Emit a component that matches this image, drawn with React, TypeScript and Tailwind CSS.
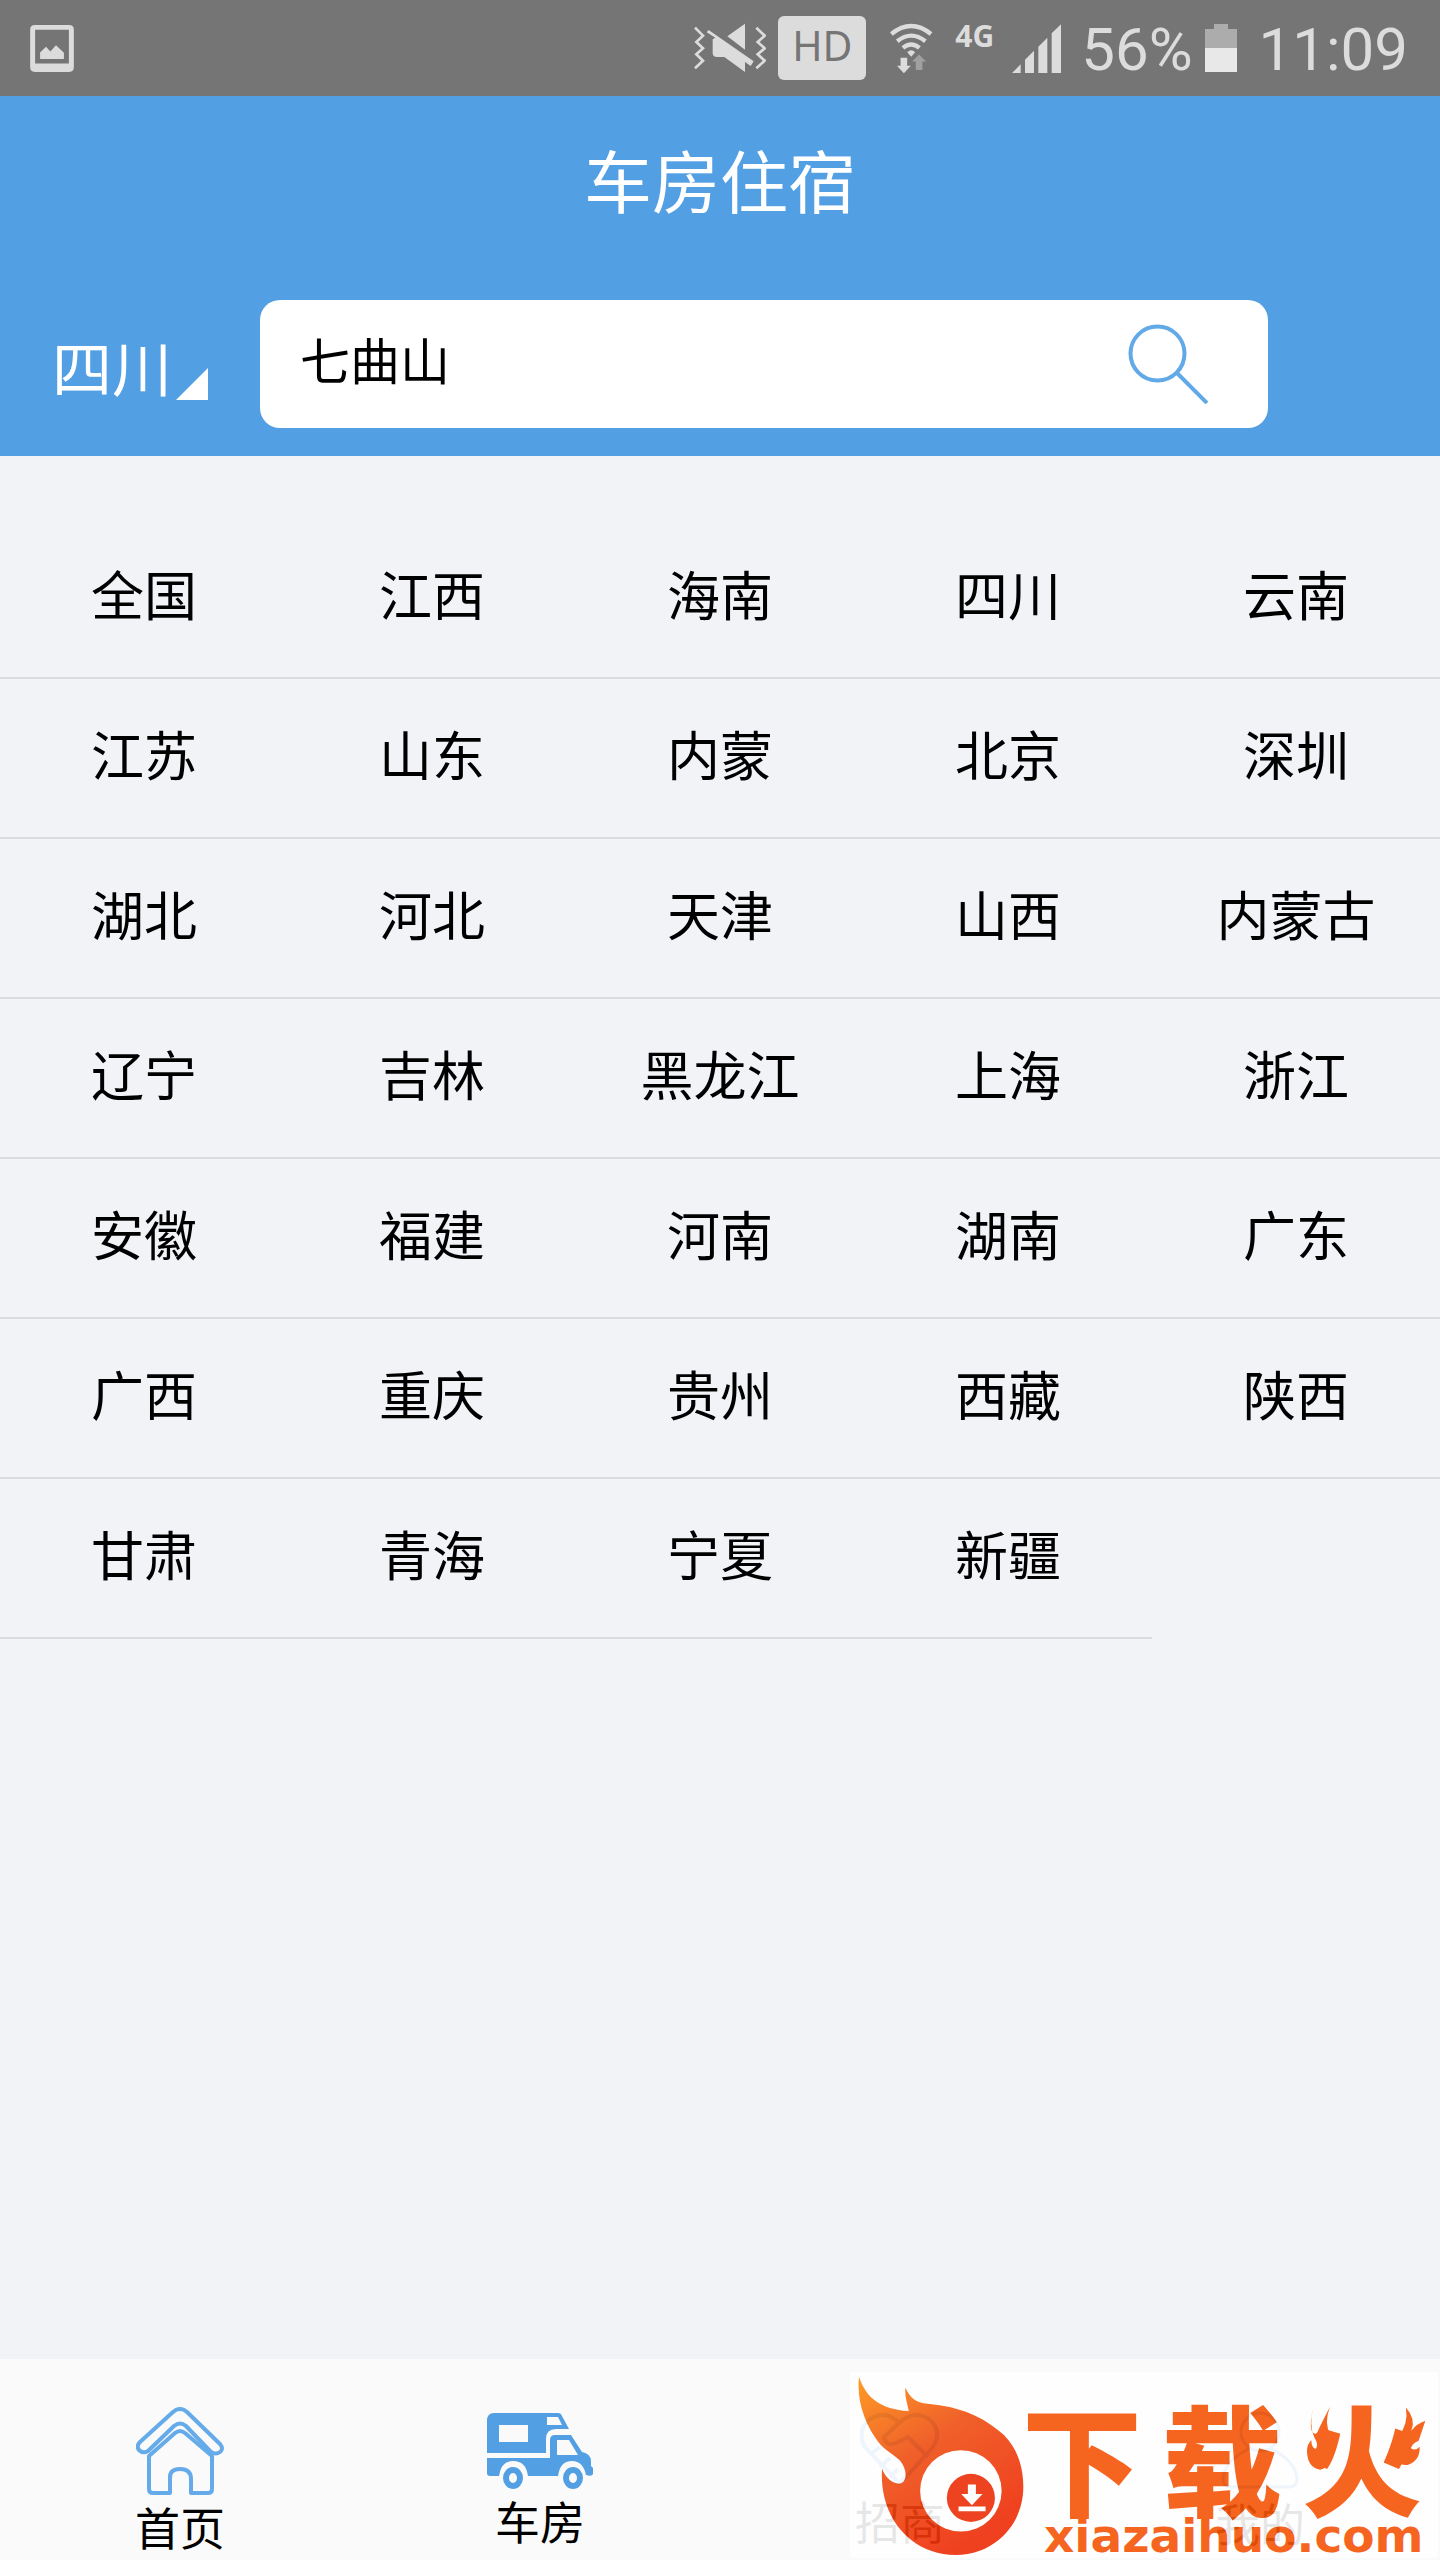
import { useState } from "react";

const provinces = [
  "全国", "江西", "海南", "四川", "云南",
  "江苏", "山东", "内蒙", "北京", "深圳",
  "湖北", "河北", "天津", "山西", "内蒙古",
  "辽宁", "吉林", "黑龙江", "上海", "浙江",
  "安徽", "福建", "河南", "湖南", "广东",
  "广西", "重庆", "贵州", "西藏", "陕西",
  "甘肃", "青海", "宁夏", "新疆",
];

function PictureIcon() {
  return (
    <svg viewBox="90 70 132 142" className="h-[47px] w-11" fill="#dcdcdc" aria-hidden="true">
      <path fillRule="evenodd" d="M104 70h104q14 0 14 14v114q0 14-14 14H104q-14 0-14-14V84q0-14 14-14ZM105 84v102h102V84Z" />
      <path d="M120 173v-20l18-17 13 14 17-19 24 23v19Z" />
    </svg>
  );
}

function MuteIcon() {
  return (
    <svg viewBox="42 66 216 150" className="h-[50px] w-[72px]" fill="#dcdcdc" aria-hidden="true">
      <g fill="none" stroke="#dcdcdc" strokeWidth="8">
        <path d="M45 80 69 104 49 123 69 142 49 160 69 179 45 202" />
        <path d="M229 80 254 104 233 123 254 142 233 160 254 179 229 202" />
      </g>
      <path d="M142 106 195 68v78Z" />
      <path d="m86 87 135 94-9 14-17-12v30l-62-45h-22q-13 0-13-13v-40l8-5-26-16Z" />
    </svg>
  );
}

function WifiIcon() {
  return (
    <svg viewBox="630 64 130 152" className="h-[51px] w-[43px]" aria-hidden="true">
      <g fill="none" stroke="#dcdcdc" strokeWidth="13">
        <path d="M634 96Q694 48 754 96" />
        <path d="M652 118Q694 84 737 118" />
        <path d="M669 138Q694 118 719 138" />
      </g>
      <path d="M682 151q12-11 24 0l-12 14Z" fill="#dcdcdc" />
      <path d="M662 168h20v24h11l-21 23-21-23h11Z" fill="#dcdcdc" />
      <path d="M708 205v-26h-11l21-21 21 21h-11v26Z" fill="#a0a0a0" />
    </svg>
  );
}

function SignalIcon() {
  return (
    <svg viewBox="996 66 147 147" className="size-[49px]" fill="#dcdcdc" aria-hidden="true">
      <path d="M996 213 1022 187v26ZM1035 213v-40l27-27v67ZM1075 213v-79l27-27v106ZM1115 213V94l28-27v146Z" />
    </svg>
  );
}

function BatteryIcon() {
  return (
    <svg viewBox="0 0 32 48" className="h-12 w-8" aria-hidden="true">
      <path d="M9 0h14v5h9v19H0V5h9Z" fill="#acacac" />
      <path d="M0 24h32v24H0Z" fill="#e8e8e8" />
    </svg>
  );
}

function SearchIcon() {
  return (
    <svg viewBox="0 0 80 80" className="size-20" fill="none" stroke="#62a9e8" strokeWidth="4" aria-hidden="true">
      <circle cx="29.500" cy="29.500" r="27" />
      <path d="M49 49 79 79" />
    </svg>
  );
}

function HomeIcon() {
  return (
    <svg viewBox="0 0 88 88" className="size-[88px]" fill="none" stroke="#66abe9" strokeWidth="4" strokeLinejoin="round" aria-hidden="true">
      <path d="M37 5q7-6 14 0l33 32q4 5 0 8-4 3-9 0L50 19q-6-5-12 0L12 44q-5 3-9-1-3-4 1-8Z" />
      <path d="M13 49 39 26q5-4 10 0l27 23v33q0 4-4 4H55V72q0-10-11-10T34 72v14H17q-4 0-4-4Z" />
    </svg>
  );
}

function CamperIcon() {
  return (
    <svg viewBox="0 0 106 76" className="h-[76px] w-[106px]" fill="#539fe4" aria-hidden="true">
      <path fillRule="evenodd" d="M7 0h64q3 0 4 3l7 13h-13q-10 0-10 10v14H0V8q0-8 7-8ZM12 12v17h29V12ZM60 4v8h15l-4-8Z" />
      <path fillRule="evenodd" d="M0 45h63V27q0-5 5-5h16l11 17q9 2 9 9v5l2 2v6q-1 3-7 1-3-14-14-14-12 0-14 15H41q-2-15-15-15-12 0-14 15H3q-3 0-3-3ZM70 27v15h21l-9-15Z" />
      <path fillRule="evenodd" d="M26 54a10 11 0 1 0 0 22 10 11 0 1 0 0-22Zm0 6a4 5 0 1 1 0 10 4 5 0 1 1 0-10ZM86 54a10 11 0 1 0 0 22 10 11 0 1 0 0-22Zm0 6a4 5 0 1 1 0 10 4 5 0 1 1 0-10Z" />
    </svg>
  );
}

function HandshakeIcon() {
  return (
    <svg viewBox="0 0 80 76" className="h-[76px] w-20" fill="none" stroke="#539fe4" strokeWidth="4" strokeLinejoin="round" aria-hidden="true">
      <path d="M39 10Q26-4 10 6-4 18 5 34L39 70l9-8M39 10Q54-4 69 6q14 12 4 28L48 62M39 10 24 24q2 10 12 6l12-6 20 20M10 42l10-8M20 54l10-9M30 64l8-8" />
    </svg>
  );
}

function PersonIcon() {
  return (
    <svg viewBox="0 0 80 80" className="size-20" fill="none" stroke="#539fe4" strokeWidth="3" aria-hidden="true">
      <circle cx="40" cy="21" r="19" />
      <path d="M30 37Q4 50 3 68q0 8 8 8h58q8 0 8-8Q76 50 50 37" />
    </svg>
  );
}

const tabs = [
  { label: "首页", Icon: HomeIcon, box: "pt-12" },
  { label: "车房", Icon: CamperIcon, box: "pt-[54px]" },
  { label: "招商", Icon: HandshakeIcon, box: "pt-[54px]" },
  { label: "我的", Icon: PersonIcon, box: "pt-[52px]" },
];

function FlameLogo() {
  return (
    <svg viewBox="50 70 500 542" className="absolute top-[3px] left-[7px] h-[181px] w-[167px]" aria-hidden="true">
      <defs>
        <linearGradient id="flame" x1="0" y1="0" x2="0.6" y2="1">
          <stop offset="0" stopColor="#ff9210" />
          <stop offset="0.45" stopColor="#f05014" />
          <stop offset="1" stopColor="#ee2c08" />
        </linearGradient>
      </defs>
      <path
        fill="url(#flame)"
        d="M56 75C78 140 120 172 205 178 200 155 192 130 195 108 210 140 225 152 262 156 360 165 430 195 490 250 530 290 548 345 548 405 548 520 460 609 345 609 215 609 115 500 125 350 135 380 160 398 180 395 202 388 200 350 178 325 160 308 135 297 115 272 75 220 48 150 56 75Z"
      />
      <circle cx="361" cy="417" r="122" fill="#fff" />
      <circle cx="391" cy="438" r="72" fill="#ec300a" />
      <path d="M382 398h24v28h20l-32 34-32-34h20ZM354 464h81v14h-81Z" fill="#fff" />
    </svg>
  );
}

function SmallFlames() {
  return (
    <svg viewBox="915 70 365 200" className="absolute top-8 left-[455px] h-[67px] w-[122px]" fill="#f65508" aria-hidden="true">
      <path d="M940 82Q928 125 935 150 944 165 952 154 965 125 990 78 970 125 992 165 1007 202 994 238 975 268 958 266 922 258 921 212 920 190 934 178 934 202 948 204 956 190 943 170 926 130 940 82Z" />
      <path d="M1217 80Q1248 115 1233 150 1250 128 1275 120 1265 150 1255 180 1235 188 1232 202 1245 212 1258 198 1260 240 1222 252 1180 255 1168 220 1163 195 1195 165 1225 130 1217 80Z" />
    </svg>
  );
}

export default function App() {
  const [province, setProvince] = useState("四川");
  const [query, setQuery] = useState("七曲山");

  return (
    <div className="flex min-h-screen flex-col bg-[#f1f3f7] font-['Noto_Sans_CJK_SC',sans-serif] text-black">
      <div className="flex h-24 items-center bg-[#757575] pr-8 pl-[30px] text-[#dcdcdc]">
        <PictureIcon />
        <div className="ml-auto flex items-center">
          <MuteIcon />
          <span className="ml-3 flex h-16 w-[88px] items-center justify-center rounded-md bg-[#dcdcdc] pb-1 font-['Noto_Sans',sans-serif] text-[41px] text-[#757575]">HD</span>
          <span className="ml-6"><WifiIcon /></span>
          <span className="ml-[22px] mb-6 font-['Noto_Sans',sans-serif] text-[30px] leading-8 font-bold">4G</span>
          <span className="ml-[18px]"><SignalIcon /></span>
          <span className="ml-5 pt-1 font-['Roboto',sans-serif] text-[60px] leading-none">56%</span>
          <span className="ml-3"><BatteryIcon /></span>
          <span className="ml-[22px] pt-1 font-['Roboto',sans-serif] text-[60px] leading-none">11:09</span>
        </div>
      </div>

      <header className="bg-[#539fe4] pb-7 text-white">
        <h1 className="pt-[47px] text-center text-[68px] leading-[72px] font-normal">车房住宿</h1>
        <div className="mt-[85px] flex items-center pr-[172px] pl-[52px]">
          <div className="mr-[52px] flex items-end pt-2">
            <select
              aria-label="省份"
              value={province}
              onChange={(e) => setProvince(e.target.value)}
              className="h-[72px] w-[124px] appearance-none bg-transparent pb-1 text-[60px] leading-[68px] outline-none"
            >
              {provinces.map((p) => (
                <option key={p} value={p} className="text-black">{p}</option>
              ))}
            </select>
            <svg viewBox="0 0 32 32" className="mb-1 size-8" fill="#fff" aria-hidden="true">
              <path d="M32 0v32H0Z" />
            </svg>
          </div>
          <form className="flex h-32 flex-1 items-center rounded-[20px] bg-white pr-[60px] pl-10" onSubmit={(e) => e.preventDefault()}>
            <input
              aria-label="搜索"
              value={query}
              onChange={(e) => setQuery(e.target.value)}
              className="min-w-0 flex-1 bg-transparent pb-3 text-[50px] leading-[72px] text-black outline-none"
            />
            <button type="submit" aria-label="搜索"><SearchIcon /></button>
          </form>
        </div>
      </header>

      <main className="flex-1 pt-[63px]">
        <div className="grid grid-cols-5">
          {provinces.map((p) => (
            <button
              key={p}
              type="button"
              onClick={() => setProvince(p)}
              className="h-40 border-b-2 border-[#dadcdc] pb-2 text-[53px]"
            >
              {p}
            </button>
          ))}
        </div>
      </main>

      <footer className="relative bg-[#fafafa]">
        <nav className="grid h-[201px] grid-cols-4">
          {tabs.map(({ label, Icon, box }) => (
            <a key={label} href={"#" + label} className={"flex flex-col items-center " + box}>
              <Icon />
              <span className="mt-0.5 text-[45px] leading-[60px]">{label}</span>
            </a>
          ))}
        </nav>
        <div className="absolute right-0.5 bottom-0.5 h-[186px] w-[588px] bg-white opacity-90">
          <FlameLogo />
          <div className="absolute top-6 left-[172px] flex gap-5 text-[120px] leading-[120px] font-black text-[#f65508]">
            <span>下</span>
            <span>载</span>
            <span>火</span>
          </div>
          <SmallFlames />
          <span className="absolute -bottom-0.5 left-[194px] font-['DejaVu_Sans',sans-serif] text-[47px] leading-[48px] font-bold text-[#f65508]">xiazaihuo.com</span>
        </div>
      </footer>
    </div>
  );
}
